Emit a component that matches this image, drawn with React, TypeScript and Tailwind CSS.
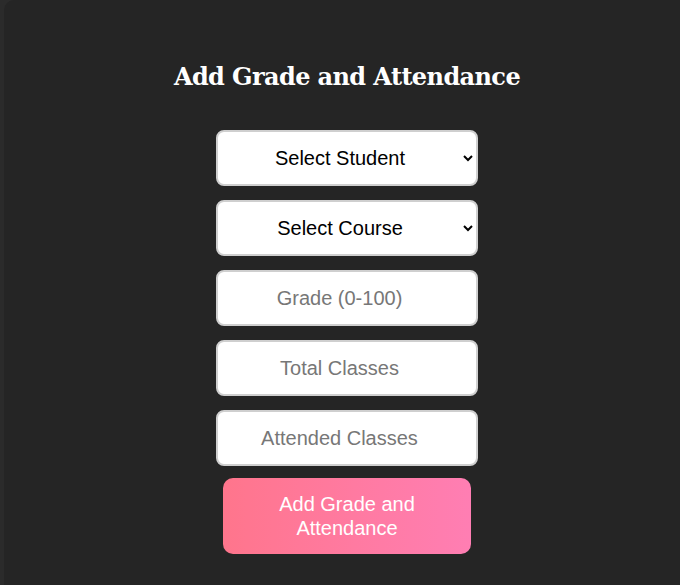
import React, { useState } from 'react';

const App: React.FC = () => {
  const [student, setStudent] = useState('');
  const [course, setCourse] = useState('');
  const [grade, setGrade] = useState('');
  const [total, setTotal] = useState('');
  const [attended, setAttended] = useState('');

  const fieldClass =
    'w-[262px] h-[56px] rounded-[8px] border-2 border-[#cfcfcf] bg-white text-[20px] text-black text-center placeholder:text-[#777] outline-none';

  return (
    <div className="min-h-screen h-[585px] overflow-hidden bg-[#2b2b2b] pl-[4px] font-['Liberation_Sans',Arial,sans-serif]">
      <div className="w-[686px] h-[600px] bg-[#252525] rounded-[10px] flex flex-col items-center pt-[59px]">
        <h2 className="text-white text-[24px] leading-[36px] font-bold font-['DejaVu_Serif',serif] tracking-[-0.6px] mb-[35px]">
          Add Grade and Attendance
        </h2>

        <form
          className="flex flex-col items-center gap-[14px]"
          onSubmit={(e) => e.preventDefault()}
        >
          <select
            value={student}
            onChange={(e) => setStudent(e.target.value)}
            className={`${fieldClass} [text-align-last:center] pl-2 pr-[10px]`}
          >
            <option value="">Select Student</option>
          </select>
          <select
            value={course}
            onChange={(e) => setCourse(e.target.value)}
            className={`${fieldClass} [text-align-last:center] pl-2 pr-[10px]`}
          >
            <option value="">Select Course</option>
          </select>
          <input
            type="number"
            placeholder="Grade (0-100)"
            value={grade}
            onChange={(e) => setGrade(e.target.value)}
            className={fieldClass}
          />
          <input
            type="number"
            placeholder="Total Classes"
            value={total}
            onChange={(e) => setTotal(e.target.value)}
            className={fieldClass}
          />
          <input
            type="number"
            placeholder="Attended Classes"
            value={attended}
            onChange={(e) => setAttended(e.target.value)}
            className={fieldClass}
          />
          <button
            type="submit"
            className="w-[248px] h-[76px] -mt-[2px] rounded-[10px] bg-gradient-to-r from-[#ff758c] to-[#ff7eb3] text-white text-[20px] leading-[24px] px-[40px]"
          >
            Add Grade and Attendance
          </button>
        </form>
      </div>
    </div>
  );
};

export default App;
